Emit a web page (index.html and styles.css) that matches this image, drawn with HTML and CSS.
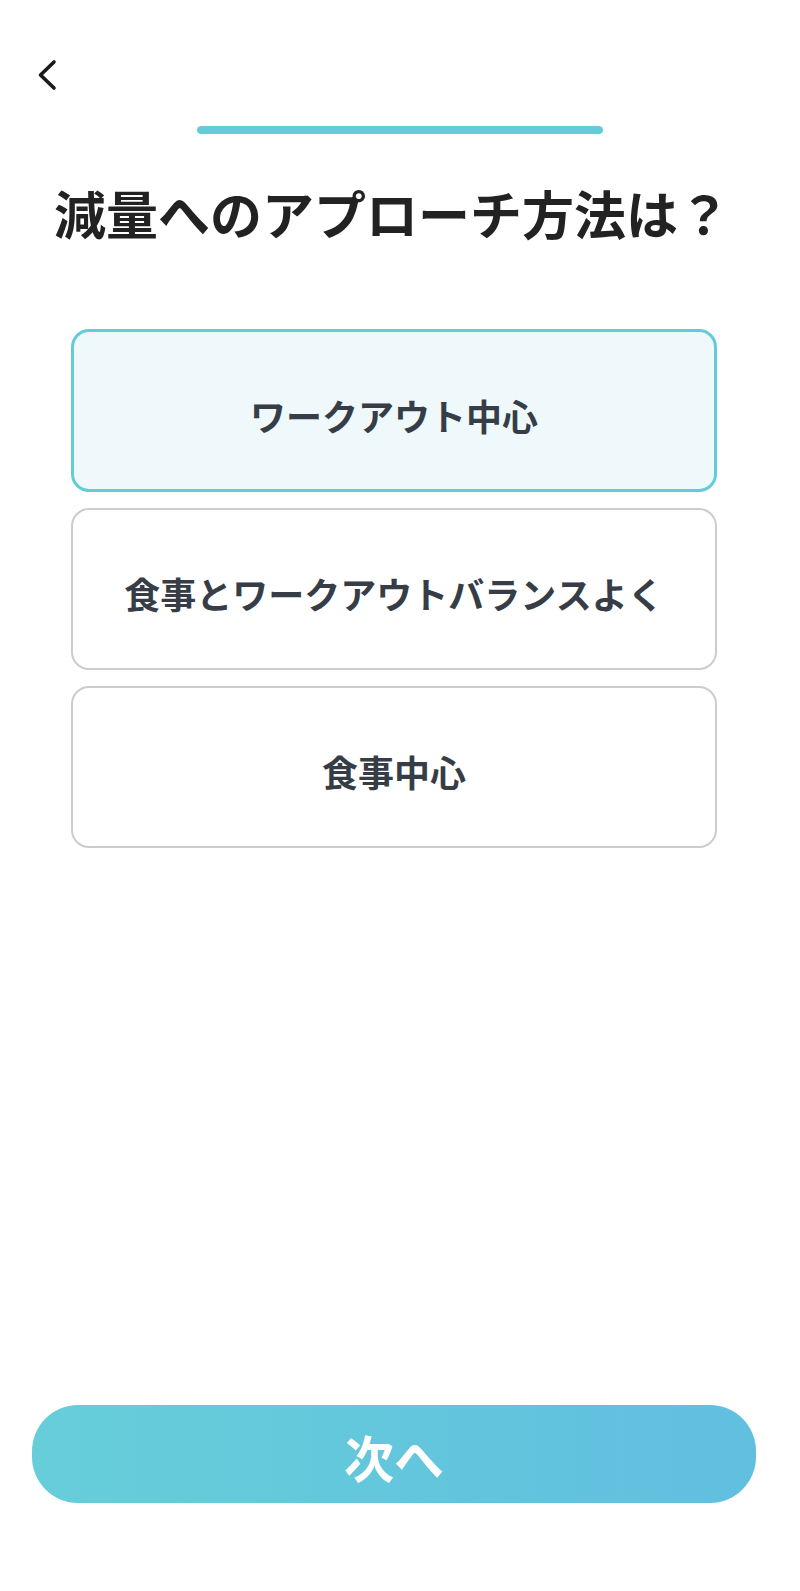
FILE: index.html
```html
<!DOCTYPE html>
<html lang="ja">
<head>
    <meta charset="UTF-8">
    <meta name="viewport" content="width=device-width, initial-scale=1.0">
    <title>減量へのアプローチ方法は？</title>
    <link rel="stylesheet" href="styles.css">
</head>
<body>
    <div class="screen">
        <div class="top-bar">
            <button class="back-btn" aria-label="戻る">
                <svg width="24" height="34" viewBox="0 0 24 34">
                    <path d="M18 4 L4.5 17 L18 30" fill="none" stroke="#1a1a1a" stroke-width="3.6" stroke-linecap="round" stroke-linejoin="round"/>
                </svg>
            </button>
        </div>

        <div class="progress">
            <div class="progress-fill" style="width: 100%"></div>
        </div>

        <h1 class="question">減量へのアプローチ方法は？</h1>

        <div class="options">
            <div class="option selected">ワークアウト中心</div>
            <div class="option">食事とワークアウトバランスよく</div>
            <div class="option">食事中心</div>
        </div>

        <div class="spacer"></div>

        <button class="next-btn">次へ</button>
    </div>
</body>
</html>
```

FILE: styles.css
```css
body {
    margin: 0;
    padding: 0;
    background-color: #fff;
    font-family: "Noto Sans CJK JP", "Noto Sans", sans-serif;
    color: #222;
}
.screen {
    height: 1591px;
    display: flex;
    flex-direction: column;
    box-sizing: border-box;
    padding: 58px 0 88px;
}
.top-bar {
    padding-left: 36px;
    height: 40px;
}
.back-btn {
    background: none;
    border: none;
    padding: 0;
    cursor: pointer;
}
.progress {
    width: 406px;
    height: 8px;
    margin: 28px auto 0;
    background-color: #e6e8eb;
    border-radius: 4px;
    overflow: hidden;
}
.progress-fill {
    height: 100%;
    background-color: #63ccd8;
    border-radius: 4px;
}
.question {
    margin: 40px 0 0;
    padding-right: 16px;
    font-size: 52px;
    font-weight: 700;
    line-height: 78px;
    text-align: center;
    color: #222;
    letter-spacing: 0;
}
.options {
    display: flex;
    flex-direction: column;
    gap: 16px;
    margin: 77px 83px 0 71px;
}
.option {
    height: 162px;
    box-sizing: border-box;
    padding-top: 8px;
    border: 2px solid #c9ccd1;
    border-radius: 18px;
    display: flex;
    align-items: center;
    justify-content: center;
    font-size: 36px;
    font-weight: 700;
    color: #363d47;
    background-color: #fff;
    cursor: pointer;
}
.option.selected {
    height: 163px;
    border: 3px solid #63ccd8;
    background-color: #eff9fb;
}
.spacer {
    flex: 1;
}
.next-btn {
    margin: 0 44px 0 32px;
    height: 98px;
    border: none;
    border-radius: 46px;
    background: linear-gradient(90deg, #66ced9, #61bfe0);
    color: #fff;
    font-family: "Noto Sans CJK JP", "Noto Sans", sans-serif;
    font-size: 50px;
    font-weight: 700;
    padding-top: 4px;
    cursor: pointer;
}
```
